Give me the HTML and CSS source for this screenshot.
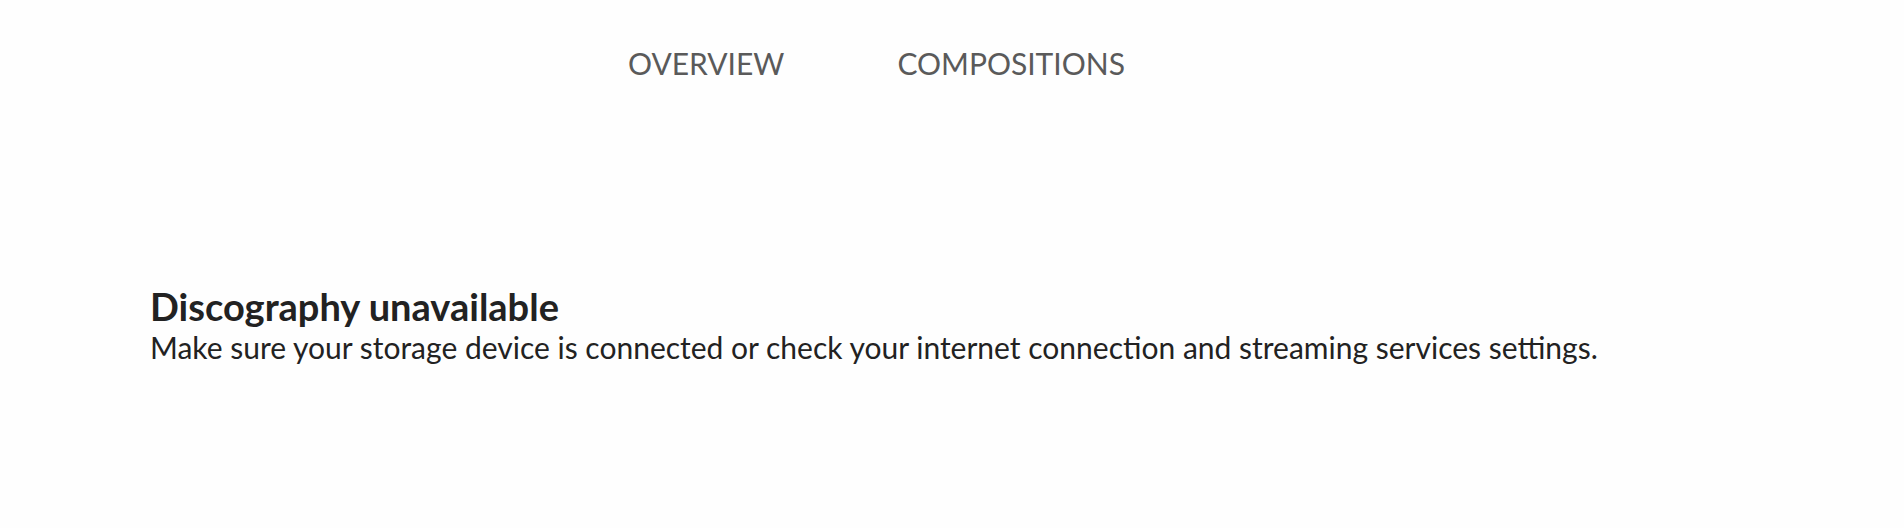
FILE: index.html
```html
<!DOCTYPE html>
<html>
<head>
<meta charset="utf-8">
<link rel="stylesheet" href="styles.css">
</head>
<body>
<div class="page">
  <nav class="tabs">
    <span class="tab">OVERVIEW</span>
    <span class="tab">COMPOSITIONS</span>
  </nav>
  <section class="empty">
    <h2 class="empty-title">Discography unavailable</h2>
    <p class="empty-text">Make sure your storage device is connected or check your internet connection and streaming services settings.</p>
  </section>
</div>
</body>
</html>
```
FILE: styles.css
```css
html, body {
  margin: 0;
  padding: 0;
  background: #fefefe;
}
.page {
  width: 1904px;
  height: 528px;
  font-family: Lato, "Open Sans", sans-serif;
  display: flex;
  flex-direction: column;
}
.tabs {
  display: flex;
  gap: 113px;
  padding-left: 628px;
  padding-top: 43px;
  height: 40px;
}
.tab {
  font-size: 30px;
  line-height: 40px;
  color: #5a5a5a;
}
.empty {
  padding-left: 150px;
  padding-top: 201px;
}
.empty-title {
  margin: 0;
  font-size: 38px;
  font-weight: 700;
  line-height: 44px;
  color: #222;
}
.empty-text {
  margin: 0;
  font-size: 30px;
  line-height: 38px;
  color: #222;
}
```
